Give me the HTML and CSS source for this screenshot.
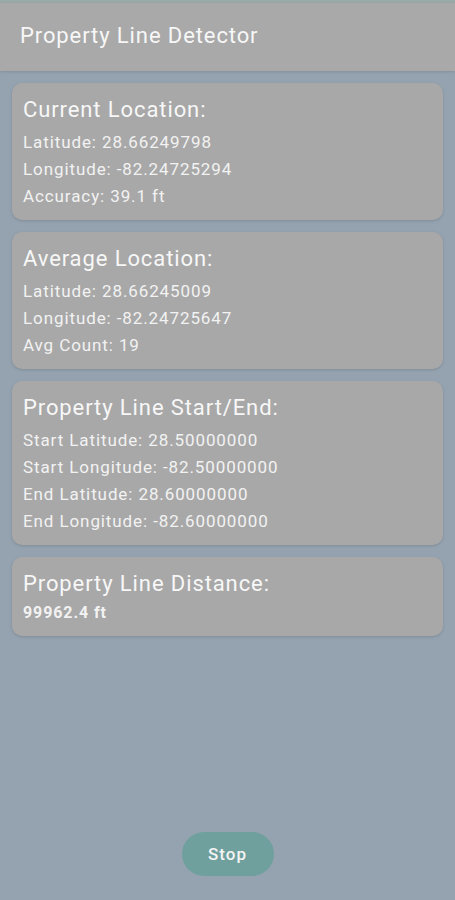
FILE: index.html
```html
<!DOCTYPE html>
<html lang="en">
<head>
  <meta charset="UTF-8" />
  <meta name="viewport" content="width=device-width, initial-scale=1.0"/>
  <title>Property Line Detector</title>
  <link rel="stylesheet" href="styles.css">
</head>
<body>
  <div class="app">
    <div class="status-strip"></div>
    <header class="topbar">
      <h1>Property Line Detector</h1>
    </header>

    <main class="content">
      <section class="card">
        <h2>Current Location:</h2>
        <div class="lines">
          <p>Latitude: 28.66249798</p>
          <p>Longitude: -82.24725294</p>
          <p>Accuracy: 39.1 ft</p>
        </div>
      </section>

      <section class="card">
        <h2>Average Location:</h2>
        <div class="lines">
          <p>Latitude: 28.66245009</p>
          <p>Longitude: -82.24725647</p>
          <p>Avg Count: 19</p>
        </div>
      </section>

      <section class="card">
        <h2>Property Line Start/End:</h2>
        <div class="lines">
          <p>Start Latitude: 28.50000000</p>
          <p>Start Longitude: -82.50000000</p>
          <p>End Latitude: 28.60000000</p>
          <p>End Longitude: -82.60000000</p>
        </div>
      </section>

      <section class="card">
        <h2>Property Line Distance:</h2>
        <p class="distance">99962.4 ft</p>
      </section>
    </main>

    <div class="actions">
      <button type="button" class="stop-btn">Stop</button>
    </div>
  </div>
</body>
</html>
```

FILE: styles.css
```css
* {
  box-sizing: border-box;
}

body {
  margin: 0;
  font-family: Roboto, "Noto Sans", sans-serif;
  background: #95a3b0;
  color: #f4f4f4;
}

.app {
  min-height: 900px;
  display: flex;
  flex-direction: column;
}

.status-strip {
  height: 3px;
  background: #9aaaa6;
}

.topbar {
  height: 68px;
  background: #a9a9a9;
  display: flex;
  align-items: center;
  padding: 0 20px 4px;
  box-shadow: 0 1px 3px rgba(0,0,0,0.12);
}

.topbar h1 {
  margin: 0;
  font-size: 22px;
  font-weight: 400;
  letter-spacing: 0.9px;
  color: #f7f7f7;
}

.content {
  flex: 1;
  display: flex;
  flex-direction: column;
  gap: 12px;
  padding: 12px 12px 0;
}

.card {
  background: #a8a8a8;
  border-radius: 10px;
  padding: 12px 11px 10px;
  box-shadow: 0 1px 3px rgba(0,0,0,0.15);
}

.card h2 {
  margin: 0;
  font-size: 22px;
  font-weight: 400;
  line-height: 30px;
  letter-spacing: 0.9px;
  color: #f7f7f7;
}

.lines {
  margin-top: 4px;
}

.card p {
  margin: 0;
  font-size: 17px;
  line-height: 27px;
  letter-spacing: 0.9px;
  color: #f2f2f2;
}

.card .distance {
  font-size: 16px;
  font-weight: 700;
  letter-spacing: 0.9px;
}

.actions {
  display: flex;
  justify-content: center;
  padding-bottom: 24px;
}

.stop-btn {
  width: 92px;
  height: 44px;
  border: none;
  border-radius: 22px;
  background: #6fa09e;
  color: #f4f4f4;
  font-family: inherit;
  font-size: 17px;
  font-weight: 500;
  letter-spacing: 1px;
  cursor: pointer;
}
```
